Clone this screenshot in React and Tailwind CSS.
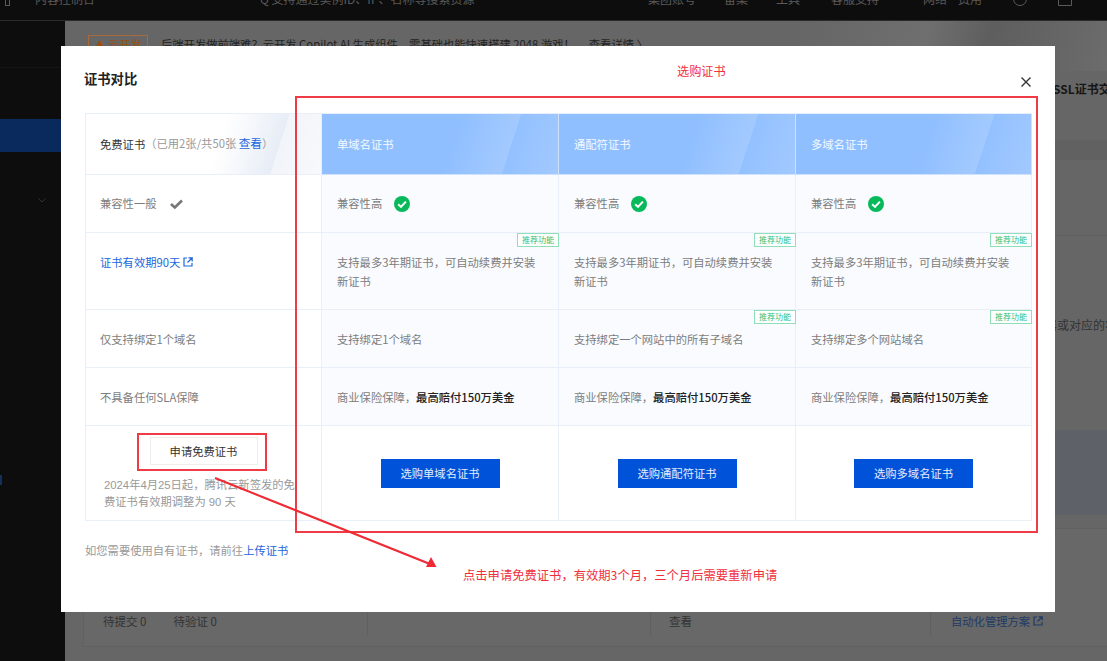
const cols = [
  { name: '单域名证书', buy: '选购单域名证书', bind: '支持绑定1个域名', bindTag: false },
  { name: '通配符证书', buy: '选购通配符证书', bind: '支持绑定一个网站中的所有子域名', bindTag: true },
  { name: '多域名证书', buy: '选购多域名证书', bind: '支持绑定多个网站域名', bindTag: true },
];

function Tag() {
  return (
    <span className="absolute top-0 right-[-1px] flex h-[14px] w-[42px] items-center justify-center border border-[#8fe0b8] bg-white text-[8px] leading-none text-[#2fc07a]">
      推荐功能
    </span>
  );
}

function GreenCheck() {
  return (
    <svg width="16" height="16" viewBox="0 0 16 16" className="ml-[12px]">
      <circle cx="8" cy="8" r="8" fill="#07b95a" />
      <path d="M4.2 8.2 L7 10.9 L11.9 5.6" fill="none" stroke="#fff" strokeWidth="2" />
    </svg>
  );
}

function ExtLink({ className = '' }) {
  return (
    <svg width="10" height="10" viewBox="0 0 10 10" className={className} fill="none" stroke="currentColor" strokeWidth="1.2">
      <path d="M4 1 H1 V9 H9 V6" />
      <path d="M5.5 0.8 H9.2 V4.5 M9 1 L4.5 5.5" />
    </svg>
  );
}

const cell = 'relative border-r border-b border-[#e8eff8]';
const paid = 'bg-[#f9fbff] flex items-center px-[15px] text-[#7d7d7d] ' + cell;
const free = 'bg-white flex items-center px-[14px] text-[#7d7d7d] ' + cell;

export default function App() {
  return (
    <div className="relative h-[661px] w-[1107px] overflow-hidden bg-[#636366] font-['Noto_Sans_CJK_SC','Noto_Sans',sans-serif] text-[11.3px]">
      {/* top bar */}
      <header className="flex h-[21px] items-start overflow-hidden border-b border-[#2a2a2a] bg-[#0d0d0d] text-[12px] leading-[18px] text-[#5a5a5a]">
        <div className="-mt-[10px] flex w-full items-center">
          <span className="ml-[5px] h-[14px] w-[5px] border border-[#5a5a5a]" />
          <span className="ml-[25px] w-[215px]">内容控制台</span>
          <span className="ml-[10px] w-[388px]">Q 支持通过实例ID、IP、名称等搜索资源</span>
          <span className="w-[46px] whitespace-nowrap">集团账号</span>
          <span className="ml-[30px] w-[22px] whitespace-nowrap">备案</span>
          <span className="ml-[30px] w-[22px] whitespace-nowrap">工具</span>
          <span className="ml-[33px] w-[46px] whitespace-nowrap">客服支持</span>
          <span className="ml-[46px] w-[22px] whitespace-nowrap">网络</span>
          <span className="ml-[13px] w-[24px] whitespace-nowrap">费用</span>
          <span className="ml-[31px] h-[14px] w-[14px] rounded-full border border-[#5a5a5a]" />
          <span className="ml-[31px] h-[14px] w-[14px] rounded-t-full border border-[#5a5a5a]" />
        </div>
      </header>

      <div className="flex h-[640px]">
        {/* side navigation */}
        <aside className="flex w-[65px] shrink-0 flex-col bg-[#0d0d0d]">
          <div className="h-[47px] border-b border-[#161616]" />
          <div className="mt-[51px] h-[33px] bg-[#0a2a5e]" />
          <div className="mt-[46px] flex justify-end pr-[19px] text-[#333]">
            <svg width="8" height="5" viewBox="0 0 8 5" fill="none" stroke="currentColor" strokeWidth="1">
              <path d="M0.5 0.5 L4 4 L7.500 0.5" />
            </svg>
          </div>
          <div className="mt-[272px] h-[10px] w-[2px] bg-[#12305a]" />
        </aside>

        {/* page behind the dialog */}
        <main className="flex min-w-0 flex-1 flex-col bg-[#666666] text-[#333]">
          <div className="flex h-[50px] items-start bg-[linear-gradient(105deg,#666_70%,#6f6f6f_82%,#5e5e5e_88%,#6c6c6c_100%)] pt-[14px] pl-[23px] text-[11.3px] whitespace-nowrap">
            <span className="flex h-[18px] w-[60px] items-center justify-center border border-[#a86a3a] text-[#9a4f10]">▲ 云开发</span>
            <span className="ml-[13px] leading-[18px] text-[#222]">后端开发做前端难？云开发 Copilot AI 生成组件，零基础也能快速搭建 2048 游戏！</span>
            <span className="ml-[14px] leading-[18px] text-[#222]">查看详情 〉</span>
          </div>
          <div className="h-[69px] pt-[9px] pl-[988px] text-[12px] leading-[18px] font-bold whitespace-nowrap text-[#161616]">SSL证书交</div>
          <div className="h-[20px] bg-[#616161]" />
          <div className="h-[76px] border-b border-[#5e5e5e]" />
          <div className="h-[194px] pt-[80px] pl-[980px] text-[12px] leading-[18px] whitespace-nowrap text-[#333]">器或对应的状态</div>
          <div className="h-[85px] bg-[#5f6169]" />
          <div className="h-[13px]" />
          <div className="ml-[18px] flex h-[119px] items-end border-y border-l border-[#616161] bg-[#686868] pb-[10px] text-[11.5px] leading-[18px] whitespace-nowrap">
            <div className="flex h-[40px] w-[283px] items-end gap-[27px] pb-[6px] pl-[19px]">
              <span>待提交 0</span>
              <span>待验证 0</span>
            </div>
            <div className="h-[40px] w-[283px] border-l border-[#606060]" />
            <div className="flex h-[40px] w-[280px] items-end border-l border-[#606060] pb-[6px] pl-[18px]">查看</div>
            <div className="flex h-[40px] items-end gap-[3px] border-l border-[#606060] pb-[6px] pl-[20px] text-[11.3px] text-[#1f3a66]">
              自动化管理方案 <ExtLink className="mb-[4px]" />
            </div>
          </div>
        </main>
      </div>

      {/* dialog */}
      <section className="absolute top-[46px] left-[61px] h-[566px] w-[994px] bg-white pr-[23px] pl-[24px]">
        <div className="flex h-[67px] items-center justify-between">
          <h2 className="-mt-[2px] -ml-px text-[13.3px] leading-[20px] font-bold text-[#222]">证书对比</h2>
          <svg width="10" height="10" viewBox="0 0 10 10" className="mt-[4px] mr-[1px]" fill="none" stroke="#333" strokeWidth="1.4">
            <path d="M0.5 0.5 L9.500 9.500 M9.500 0.5 L0.5 9.500" />
          </svg>
        </div>

        <div className="grid h-[408px] w-[947px] grid-cols-[236px_237px_237px_236px] grid-rows-[61px_58px_77px_58px_58px_95px] border-t border-l border-[#e8eff8]">
          {/* header row */}
          <div className={`${cell} flex items-center bg-[linear-gradient(108deg,#fff_56%,#e7edf6_80%,#f1f4f9_80%,#f8f9fc_100%)] pl-[14px] whitespace-nowrap`}>
            <span className="text-[#333]">免费证书</span>
            <span className="text-[#999]">（已用2张/共50张 <span className="text-[11.6px] text-[#1c66dc]">查看</span>）</span>
          </div>
          {cols.map((c) => (
            <div key={c.name} className="flex items-center border-r border-b border-[#cfe2fb] bg-[linear-gradient(108deg,#90bfff_55%,#a3caff_78%,#93c1ff_78%,#a2c9ff_100%)] pl-[15px] text-white/90">
              {c.name}
            </div>
          ))}

          {/* compatibility */}
          <div className={free}>
            兼容性一般
            <svg width="13" height="10" viewBox="0 0 13 10" className="ml-[13px]" fill="none" stroke="#777" strokeWidth="2.600">
              <path d="M1 5 L4.800 8.500 L12 1.500" />
            </svg>
          </div>
          {cols.map((c) => (
            <div key={c.name} className={paid}>兼容性高<GreenCheck /></div>
          ))}

          {/* validity */}
          <div className={`${cell} flex items-start gap-[3px] bg-white px-[14px] pt-[20px] leading-[19px] text-[#1c66dc]`}>
            证书有效期90天 <ExtLink className="mt-[4px]" />
          </div>
          {cols.map((c) => (
            <div key={c.name} className={`${cell} bg-[#f9fbff] px-[15px] pt-[20px] leading-[19px] text-[#7d7d7d]`}>
              <Tag />
              支持最多3年期证书，可自动续费并安装新证书
            </div>
          ))}

          {/* domains */}
          <div className={`${free} pt-[2px]`}>仅支持绑定1个域名</div>
          {cols.map((c) => (
            <div key={c.name} className={`${paid} pt-[2px]`}>
              {c.bindTag && <Tag />}
              {c.bind}
            </div>
          ))}

          {/* SLA */}
          <div className={`${free} pt-[2px]`}>不具备任何SLA保障</div>
          {cols.map((c) => (
            <div key={c.name} className={`${paid} pt-[2px]`}>
              商业保险保障，<span className="font-medium text-[#222]">最高赔付150万美金</span>
            </div>
          ))}

          {/* actions */}
          <div className={`${cell} flex flex-col items-center bg-white pt-[11px]`}>
            <button className="h-[28px] w-[108px] border border-[#eeeeee] bg-white text-[11.3px] text-[#333]">申请免费证书</button>
            <p className="mt-[12px] w-full pl-[18px] font-['Liberation_Sans','Noto_Sans_CJK_SC',sans-serif] text-[11.3px] leading-[17px] whitespace-nowrap text-[#999]">
              2024年4月25日起，腾讯云新签发的免<br />费证书有效期调整为 90 天
            </p>
          </div>
          {cols.map((c) => (
            <div key={c.name} className={`${cell} flex items-center justify-center bg-white`}>
              <button className="h-[29px] w-[119px] bg-[#0052d9] text-[11.3px] text-white/90">{c.buy}</button>
            </div>
          ))}
        </div>

        <p className="mt-[20px] text-[11.3px] leading-[18px] text-[#999]">
          如您需要使用自有证书，请前往<span className="text-[#1c66dc]">上传证书</span>
        </p>
      </section>

      {/* red annotations drawn over the screenshot */}
      <div className="absolute top-[96px] left-[295px] h-[437px] w-[743px] border-2 border-[#ee3b46]" />
      <div className="absolute top-[433px] left-[137px] h-[38px] w-[130px] border-2 border-[#ee3b46]" />
      <span className="absolute top-[62px] left-[677px] text-[12.2px] leading-[18px] text-[#f0303c]">选购证书</span>
      <span className="absolute top-[566px] left-[463px] text-[12.3px] leading-[18px] whitespace-nowrap text-[#f0303c]">
        点击申请免费证书，有效期3个月，三个月后需要重新申请
      </span>
      <svg className="absolute top-0 left-0" width="1107" height="661" viewBox="0 0 1107 661" fill="none">
        <path d="M215 478 L430 564" stroke="#ee2a35" strokeWidth="2.200" />
        <path d="M436.500 567 L426 567 L431 557 Z" fill="#ee2a35" />
      </svg>
    </div>
  );
}
